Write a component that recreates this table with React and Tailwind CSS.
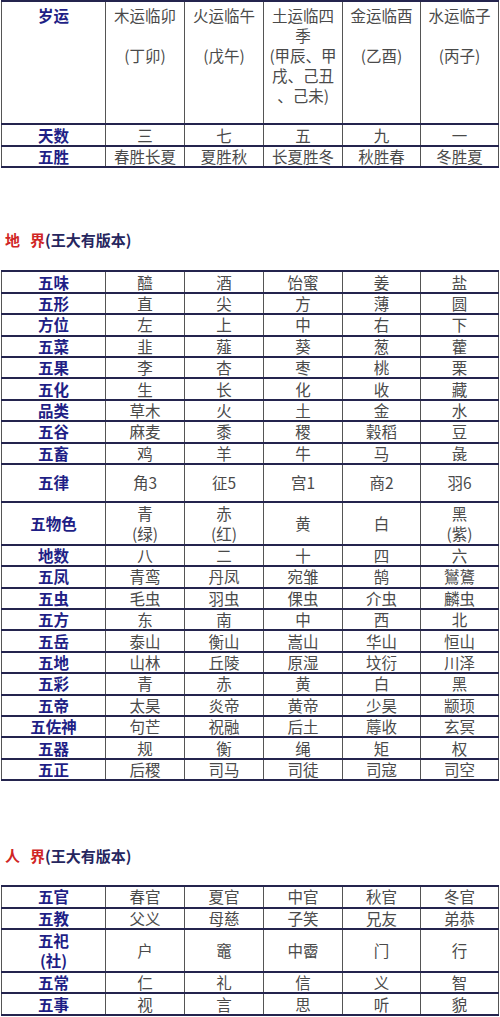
import React from 'react';

const cjk = { fontFamily: '"Noto Sans CJK SC", "Noto Sans", sans-serif' };

const yunHead = [
  ['木运临卯', '', '(丁卯)'],
  ['火运临午', '', '(戊午)'],
  ['土运临四', '季', '(甲辰、甲', '戌、己丑', '、己未)'],
  ['金运临酉', '', '(乙酉)'],
  ['水运临子', '', '(丙子)'],
];

const yunRows = [
  ['天数', ['三', '七', '五', '九', '一'], 'h-[22px]'],
  ['五胜', ['春胜长夏', '夏胜秋', '长夏胜冬', '秋胜春', '冬胜夏']],
];

const diRows = [
  ['五味', ['醯', '酒', '饴蜜', '姜', '盐']],
  ['五形', ['直', '尖', '方', '薄', '圆']],
  ['方位', ['左', '上', '中', '右', '下']],
  ['五菜', ['韭', '薤', '葵', '葱', '藿']],
  ['五果', ['李', '杏', '枣', '桃', '栗']],
  ['五化', ['生', '长', '化', '收', '藏']],
  ['品类', ['草木', '火', '土', '金', '水']],
  ['五谷', ['麻麦', '黍', '稷', '穀稻', '豆']],
  ['五畜', ['鸡', '羊', '牛', '马', '彘']],
  ['五律', ['角3', '征5', '宫1', '商2', '羽6'], 'h-[38px]'],
  ['五物色', [['青', '(绿)'], ['赤', '(红)'], '黄', '白', ['黑', '(紫)']], 'h-[43px]'],
  ['地数', ['八', '二', '十', '四', '六']],
  ['五凤', ['青鸾', '丹凤', '宛雏', '鹄', '鸑鷟']],
  ['五虫', ['毛虫', '羽虫', '倮虫', '介虫', '麟虫']],
  ['五方', ['东', '南', '中', '西', '北']],
  ['五岳', ['泰山', '衡山', '嵩山', '华山', '恒山']],
  ['五地', ['山林', '丘陵', '原湿', '坟衍', '川泽']],
  ['五彩', ['青', '赤', '黄', '白', '黑']],
  ['五帝', ['太昊', '炎帝', '黄帝', '少昊', '颛顼']],
  ['五佐神', ['句芒', '祝融', '后土', '蓐收', '玄冥']],
  ['五器', ['规', '衡', '绳', '矩', '权']],
  ['五正', ['后稷', '司马', '司徒', '司寇', '司空']],
];

const renRows = [
  ['五官', ['春官', '夏官', '中官', '秋官', '冬官']],
  ['五教', ['父义', '母慈', '子笑', '兄友', '弟恭']],
  [['五祀', '(社)'], ['户', '竈', '中霤', '门', '行'], 'h-[43px]'],
  ['五常', ['仁', '礼', '信', '义', '智']],
  ['五事', ['视', '言', '思', '听', '貌']],
];

const Lines = ({ v }) =>
  Array.isArray(v) ? v.map((l, i) => <div key={i} className="leading-[20px]">{l === '' ? '\u00a0' : l}</div>) : v;

const cell = 'border-x border-x-[#555] border-y-2 border-y-[#24244e] text-center align-middle p-0';

const Table = ({ rows, head }) => (
  <table className="ml-px w-[497px] border-collapse table-fixed text-[15.5px] leading-[17px]" style={cjk}>
    <colgroup>
      <col className="w-[104px]" />
      <col className="w-[79px]" />
      <col className="w-[79px]" />
      <col className="w-[79px]" />
      <col className="w-[78px]" />
      <col className="w-[78px]" />
    </colgroup>
    <tbody>
      {head && (
        <tr className="h-[123px]">
          <td className={`${cell} !align-top pt-[3px] font-bold text-[#1f1f86] leading-[20px]`}>岁运</td>
          {head.map((h, i) => (
            <td key={i} className={`${cell} !align-top pt-[3px] text-[#4a4a4a]`}>
              <Lines v={h} />
            </td>
          ))}
        </tr>
      )}
      {rows.map(([label, vals, h], i) => (
        <tr key={i} className={h || 'h-[21.4px]'}>
          <td className={`${cell} font-bold text-[#1f1f86]`}>
            <Lines v={label} />
          </td>
          {vals.map((v, j) => (
            <td key={j} className={`${cell} text-[#4a4a4a]`}>
              <Lines v={v} />
            </td>
          ))}
        </tr>
      ))}
    </tbody>
  </table>
);

const Title = ({ a, b }) => (
  <div className="pl-[5px] text-[15px] font-bold leading-[20px]" style={cjk}>
    <span className="text-[#d02525]">{a}</span>
    <span className="ml-[10px] text-[#d02525]">{b}</span>
    <span className="text-[#26265e]">(王大有版本)</span>
  </div>
);

export default function App() {
  return (
    <div className="w-[500px] h-[1017px] overflow-hidden bg-white">
      <Table rows={yunRows} head={yunHead} />
      <div className="h-[62px]" />
      <Title a="地" b="界" />
      <div className="h-[20px]" />
      <Table rows={diRows} />
      <div className="h-[65px]" />
      <Title a="人" b="界" />
      <div className="h-[19px]" />
      <Table rows={renRows} />
    </div>
  );
}
